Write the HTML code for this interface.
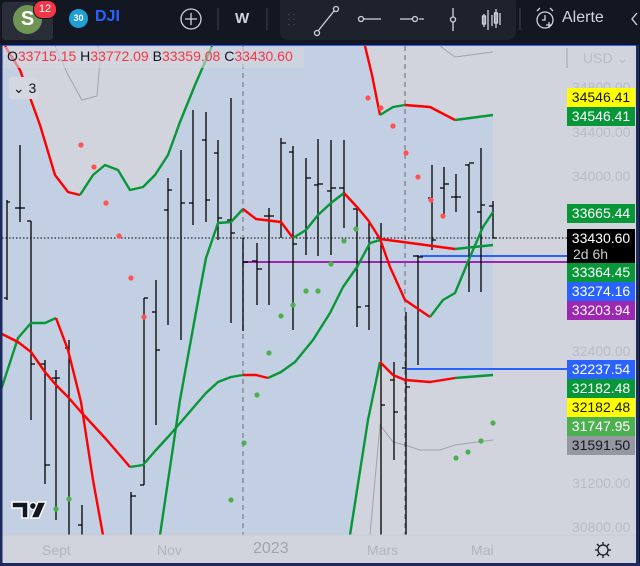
<!DOCTYPE html>
<html><head><meta charset="utf-8"><style>
html,body{margin:0;padding:0;width:640px;height:566px;overflow:hidden;background:#131722;font-family:"Liberation Sans",sans-serif}
.top{position:absolute;left:0;top:0;width:640px;height:44px;background:#131722}
.tb{position:absolute;left:280px;top:0;width:236px;height:40px;background:#1e222d;border-radius:0 0 8px 8px}
.chart{position:absolute;left:2px;top:45px;width:634px;height:518px;background:#d1d4dc;border-top:1px solid #2962ff}
.lbl{position:absolute;left:567px;width:68px;height:19px;font-size:14px;line-height:19px;text-align:center;color:#fff}
.ax{position:absolute;left:572px;font-size:14px;color:#b8bcc6}
.t{position:absolute;top:542px;font-size:14px;color:#b0b4be}
</style></head><body>
<div class="top"></div>
<div style="position:absolute;left:2px;top:2px;width:51px;height:38px;background:#2a2e39;border-radius:3px"></div>
<div style="position:absolute;left:13px;top:5px;width:29px;height:29px;border-radius:50%;background:#6f9455;color:#fff;font-size:20px;font-weight:bold;text-align:center;line-height:29px">S</div>
<div style="position:absolute;left:33px;top:0px;width:22px;height:17px;border-radius:9px;background:#f23645;color:#fff;font-size:11px;text-align:center;line-height:17px;border:1px solid #131722">12</div>
<div style="position:absolute;left:69px;top:9px;width:19px;height:19px;border-radius:50%;background:#1e9fd8;color:#fff;font-size:9px;text-align:center;line-height:19px;font-weight:bold">30</div>
<div style="position:absolute;left:95px;top:8px;color:#2962ff;font-size:16px;font-weight:bold">DJI</div>
<svg style="position:absolute;left:0;top:0" width="640" height="44">
<circle cx="191" cy="19" r="10" fill="none" stroke="#d1d4dc" stroke-width="1.3"/><path d="M185 19h12M191 13v12" stroke="#d1d4dc" stroke-width="1.3"/>
<path d="M218 8v22M267 8v22M520 8v22" stroke="#434651"/>
</svg>
<div style="position:absolute;left:235px;top:10px;color:#d1d4dc;font-size:15px;font-weight:bold">W</div>
<div class="tb"></div>
<svg style="position:absolute;left:0;top:0" width="640" height="44" fill="none" stroke="#d1d4dc" stroke-width="1.3">
<path d="M289 14v1M294 14v1M289 19v1M294 19v1M289 24v1M294 24v1" stroke="#555"/>
<path d="M318 31L334 11"/><circle cx="317" cy="33" r="2.5"/><circle cx="336" cy="9" r="2.5"/>
<circle cx="361" cy="19" r="2.5"/><path d="M364 19h17"/>
<path d="M400 19h12M419 19h5"/><circle cx="415" cy="19" r="2.5"/>
<path d="M453 8v9M453 22v9"/><circle cx="453" cy="19.5" r="2.5"/>
<path d="M484 14v13M488 10v20M492 15v11M496 9v19M500 13v12"/>
<rect x="482.5" y="16" width="3" height="8"/><rect x="494.5" y="13" width="3" height="10"/>
<circle cx="545" cy="20" r="8"/><path d="M545 15v5h-3M537 11l3-3M553 11l-3-3M546 25h6M549 22v6"/>
<path d="M637 13l-5 6 5 6"/>
</svg>
<div style="position:absolute;left:562px;top:9px;color:#d1d4dc;font-size:16px">Alerte</div>
<div class="chart"></div>
<svg style="position:absolute;left:0;top:0" width="640" height="566">
<path d="M2 46 L5 46 L20 70 L40 125 L55 175 L68 192 L80 195 L93 175 L105 165 L118 170 L130 190 L143 187 L155 175 L168 155 L180 122 L195 85 L212 46 L365 46 L380 115 L393 107 L405 105 L430 107 L455 120 L493 115 L493 375 L455 378 L430 382 L405 380 L393 375 L380 362 L368 420 L352 535 L2 535 Z" fill="#c3cfe2"/>
<path d="M55 46L68 75L82 100L97 96L100 60L98 46M440 46L455 57L493 52M370 535L380 425L393 442L405 445L420 450L440 450L455 445L470 443L493 440" fill="none" stroke="#a0a3aa" stroke-width="1"/>
<path d="M243 46V535M405 46V535" stroke="#787b86" stroke-dasharray="5,4" stroke-width="1.2"/>
<path d="M2 238H567" stroke="#000" stroke-dasharray="1.5,2" stroke-width="1"/>
<path d="M243 262H567" stroke="#9c27b0" stroke-width="2"/>
<path d="M420 256H567M407 369H567" stroke="#2962ff" stroke-width="2"/>
<g stroke="#000" stroke-width="1.3">
<path d="M7 200V300M7 202h3M7 298h-3"/>
<path d="M20 145V222M15 208h10"/>
<path d="M31 221V420M31 221h-4M31 364h4"/>
<path d="M45 360V484M45 364h-5M45 465h5"/>
<path d="M56 370V520M56 378h-4M56 378h4"/>
<path d="M69 340V535M69 348h-4"/>
<path d="M82 505V535M82 525h-4"/>
<path d="M131 492V535M131 496h5"/>
<path d="M144 298V485M144 298h4M144 485h-4"/>
<path d="M156 280V425M156 312h-4M156 350h4"/>
<path d="M168 178V325M168 210h-4M168 190h4"/>
<path d="M181 150V340M181 203h4"/>
<path d="M193 110V225M193 203h-4"/>
<path d="M206 112V222M206 140h-4M206 200h4"/>
<path d="M218 140V240M218 153h-4M218 218h4"/>
<path d="M231 98V323M231 220h-4M231 233h4"/>
<path d="M243 238V331M243 262h5"/>
<path d="M257 243V305M257 261h-5M257 269h5"/>
<path d="M269 208V305M269 216h-5M269 216h5"/>
<path d="M281 138V238M281 143h5"/>
<path d="M293 146V330M293 152h-4M293 244h4"/>
<path d="M306 158V255M306 178h5"/>
<path d="M318 139V256M318 185h-4M318 184h5"/>
<path d="M331 140V255M331 191h-4M331 188h5"/>
<path d="M344 140V228M344 188h-5"/>
<path d="M357 209V327M357 209h-4M357 307h4"/>
<path d="M369 223V330M369 306h-4"/>
<path d="M381 223V535M381 238h-5M381 405h4"/>
<path d="M394 362V460M394 380h-4M394 412h4"/>
<path d="M406 312V535M406 368h-4M406 387h4"/>
<path d="M418 255V365M418 256h-5M418 257h5"/>
<path d="M432 165V250M432 198h-4M432 240h4"/>
<path d="M444 167V215M444 188h-4M444 184h5"/>
<path d="M456 174V212M456 197h-5M456 197h5"/>
<path d="M469 164V292M469 165h-4M469 163h5"/>
<path d="M481 148V292M481 212h-4M481 205h4"/>
<path d="M493 201V238M493 206h-4M493 238h4"/>
</g>
<g fill="none" stroke-width="2.4" stroke-linejoin="round">
<path d="M5 46L20 70L40 125L55 175L68 192L80 195" stroke="#f00"/>
<path d="M80 195L93 175L105 165L118 170L130 190L143 187L155 175L168 155L180 122L195 85L212 46" stroke="#089738"/>
<path d="M365 46L372 75L380 115" stroke="#f00"/>
<path d="M380 115L393 107L405 105" stroke="#089738"/>
<path d="M405 105L430 107L455 120" stroke="#f00"/>
<path d="M455 120L493 115" stroke="#089738"/>
<path d="M350 535L368 420L380 362" stroke="#089738"/>
<path d="M380 362L393 375L405 380L430 382L455 378" stroke="#f00"/>
<path d="M455 378L493 375" stroke="#089738"/>
<path d="M0 393L18 338L31 323L45 323L56 318" stroke="#089738"/>
<path d="M56 318L68 350L81 402L93 480L103 535" stroke="#f00"/>
<path d="M160 535L180 400L200 290L206 258L218 223L231 222L243 209" stroke="#089738"/>
<path d="M243 209L256 219L281 222L293 238" stroke="#f00"/>
<path d="M293 238L306 230L318 215L331 203L344 193" stroke="#089738"/>
<path d="M344 193L357 207L368 220L380 239L390 267L405 300L430 317" stroke="#f00"/>
<path d="M380 239L403 242L455 249" stroke="#f00"/>
<path d="M455 249L493 245" stroke="#089738"/>
<path d="M430 317L443 300L455 293L470 257L483 227L493 212" stroke="#089738"/>
<path d="M0 333L18 342L31 352L45 372L56 385L68 397L81 412L93 425L105 438L118 453L130 467" stroke="#f00"/>
<path d="M130 467L143 465L156 450L168 437L181 422L193 408L206 393L218 382L231 377L243 375" stroke="#089738"/>
<path d="M243 375L256 375L268 378" stroke="#f00"/>
<path d="M268 378L281 372L295 362L313 340L330 313L343 287L357 267L370 243L380 240" stroke="#089738"/>
</g>
<g fill="#ff5252">
<circle cx="81" cy="145" r="2.6"/><circle cx="94" cy="167" r="2.6"/><circle cx="106" cy="203" r="2.6"/><circle cx="119" cy="236" r="2.6"/><circle cx="131" cy="278" r="2.6"/><circle cx="144" cy="317" r="2.6"/>
<circle cx="368" cy="98" r="2.6"/><circle cx="381" cy="108" r="2.6"/><circle cx="393" cy="126" r="2.6"/><circle cx="406" cy="153" r="2.6"/><circle cx="418" cy="177" r="2.6"/><circle cx="431" cy="200" r="2.6"/><circle cx="443" cy="216" r="2.6"/>
</g>
<g fill="#4caf50">
<circle cx="231" cy="500" r="2.6"/><circle cx="244" cy="443" r="2.6"/><circle cx="257" cy="395" r="2.6"/><circle cx="269" cy="353" r="2.6"/><circle cx="281" cy="316" r="2.6"/><circle cx="293" cy="305" r="2.6"/><circle cx="306" cy="291" r="2.6"/><circle cx="318" cy="291" r="2.6"/><circle cx="331" cy="264" r="2.6"/><circle cx="344" cy="241" r="2.6"/><circle cx="356" cy="229" r="2.6"/>
<circle cx="56" cy="509" r="2.6"/><circle cx="69" cy="499" r="2.6"/>
<circle cx="456" cy="458" r="2.6"/><circle cx="468" cy="452" r="2.6"/><circle cx="481" cy="441" r="2.6"/><circle cx="493" cy="423" r="2.6"/>
</g>
<path d="M2 535H636" stroke="#c8cbd3"/>
<path d="M567 48V68" stroke="#a0a3aa"/>
<path d="M12 502h16v16h-6v-10h-10z" fill="#131722" stroke="#fff" stroke-width="1.5"/>
<circle cx="33" cy="506" r="3.5" fill="#131722" stroke="#fff" stroke-width="1.2"/>
<path d="M38 502h8l-7 16h-8z" fill="#131722" stroke="#fff" stroke-width="1.5"/>
<circle cx="603" cy="550" r="5" fill="none" stroke="#131722" stroke-width="1.3"/>
<path d="M603 542v3M603 555v3M595 550h3M608 550h3M597 544l2 2M607 554l2 2M609 544l-2 2M599 554l-2 2" stroke="#131722" stroke-width="1.3"/>
<path d="M1 45V566M637.5 45V566M0 564.5H640" stroke="#1c2a5e" stroke-width="3"/>
</svg>
<div style="position:absolute;left:4px;top:47px;width:300px;height:21px;background:#d3d7e0;opacity:.6"></div>
<div style="position:absolute;left:7px;top:48px;font-size:14px;color:#131722;white-space:nowrap">O<span style="color:#f23645">33715.15</span> H<span style="color:#f23645">33772.09</span> B<span style="color:#f23645">33359.08</span> C<span style="color:#f23645">33430.60</span></div>
<div style="position:absolute;left:9px;top:77px;width:29px;height:22px;background:#d3d7e0;border-radius:3px;font-size:14px;line-height:22px;color:#131722">&nbsp;⌄ 3</div>
<div class="ax" style="left:583px;top:50px;color:#b8bcc6">USD ⌄</div>
<div class="ax" style="top:79px">34800.00</div>
<div class="ax" style="top:124px">34400.00</div>
<div class="ax" style="top:168px">34000.00</div>
<div class="ax" style="top:343px">32400.00</div>
<div class="ax" style="top:475px">31200.00</div>
<div class="ax" style="top:519px">30800.00</div>
<div class="lbl" style="top:88px;background:#ffff00;color:#131722">34546.41</div>
<div class="lbl" style="top:107px;background:#089738">34546.41</div>
<div class="lbl" style="top:204px;background:#089738">33665.44</div>
<div class="lbl" style="top:229px;height:34px;background:#000;line-height:16px;padding-top:1px;box-sizing:border-box">33430.60<br><span style="color:#ccc;display:inline-block;width:60px;text-align:left;padding-left:4px">2d 6h</span></div>
<div class="lbl" style="top:263px;background:#089738">33364.45</div>
<div class="lbl" style="top:282px;background:#2962ff">33274.16</div>
<div class="lbl" style="top:301px;background:#9c27b0">33203.94</div>
<div class="lbl" style="top:360px;background:#2962ff">32237.54</div>
<div class="lbl" style="top:379px;background:#089738">32182.48</div>
<div class="lbl" style="top:398px;background:#ffff00;color:#131722">32182.48</div>
<div class="lbl" style="top:417px;background:#4caf50">31747.95</div>
<div class="lbl" style="top:436px;background:#9598a1;color:#131722">31591.50</div>
<div class="t" style="left:42px">Sept</div>
<div class="t" style="left:157px">Nov</div>
<div class="t" style="left:253px;font-size:16px;top:540px;color:#a0a4ae">2023</div>
<div class="t" style="left:367px">Mars</div>
<div class="t" style="left:471px">Mai</div>
</body></html>
